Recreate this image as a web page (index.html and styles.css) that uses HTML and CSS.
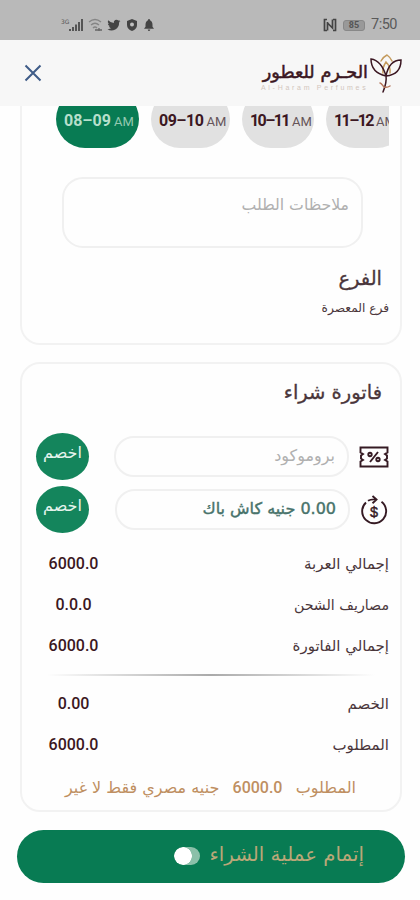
FILE: index.html
```html
<!DOCTYPE html>
<html lang="ar" dir="rtl">

<head>
    <meta charset="utf-8">
    <meta name="viewport" content="width=device-width, initial-scale=1.0">
    <title>الحرم للعطور</title>
    <link rel="stylesheet" href="styles.css">
</head>

<body>
    <div class="status" dir="ltr">
        <div class="status-icons">
            <span class="net">3G</span>
            <svg width="15" height="14" viewBox="0 0 15 14" fill="#555">
                <path d="M0 11h2v2H0zM3 9h2v4H3zM6 6.500h2V13H6zM9 4h2v9H9zM12 1h2v12h-2z" />
            </svg>
            <svg class="wifi" width="15" height="14" viewBox="0 0 15 14" fill="none" stroke="#858585" stroke-width="1.300">
                <path d="M1 4q6-5 12 0M3 7q4-3.500 8 0M5 10q2-2 4 0" />
                <path d="M7 12h7M11 10v3" stroke="#666" />
            </svg>
            <svg width="14" height="14" viewBox="0 0 24 24" fill="#444">
                <path d="M23 5c-.8.400-1.700.600-2.600.800 1-.600 1.600-1.500 2-2.500-.9.500-1.900.900-2.900 1.100A4.600 4.600 0 0 0 11.700 8.600 13 13 0 0 1 2.300 3.800 4.600 4.600 0 0 0 3.700 10c-.8 0-1.500-.2-2.100-.6 0 2.200 1.600 4.100 3.700 4.600-.7.200-1.400.200-2.100.1.600 1.800 2.300 3.100 4.300 3.200A9.300 9.300 0 0 1 .7 19.200 13 13 0 0 0 20.700 7.600C21.600 6.900 22.400 6 23 5z" />
            </svg>
            <svg width="12" height="14" viewBox="0 0 12 14">
                <path d="M6 1l5 2v4q0 4-5 6-5-2-5-6V3z" fill="#444" />
                <circle cx="6" cy="6.500" r="2" fill="#c0c0c0" />
            </svg>
            <svg width="12" height="14" viewBox="0 0 12 14" fill="#444">
                <path d="M6 1q1 0 1 1.200 2.500 1 2.500 4.500v2l1.500 2H1l1.500-2v-2q0-3.500 2.500-4.500Q5 1 6 1zM4.700 11.500h2.600q-.3 1.500-1.300 1.500t-1.300-1.500z" />
            </svg>
        </div>
        <div class="status-right">
            <svg width="14" height="14" viewBox="0 0 14 14" fill="none" stroke="#444" stroke-width="1.700">
                <path d="M4 1.500H1.500v11H4M10 12.500h2.500v-11H10M4.500 4v8.500M4.500 5l5 5V1.500" />
            </svg>
            <span class="battery">85</span>
            <span class="time">7:50</span>
        </div>
    </div>

    <header>
        <div class="brand">
            <svg width="32" height="41" viewBox="0 0 32 41" fill="none" stroke="#3b1722" stroke-width="1.500" stroke-linecap="round">
                <path d="M11 8q2-4 6-6 3 2 5 6M13 20q-1-5 3-11 5 5 4 11" stroke="#c49a5c" />
                <path d="M16 23C7 21 1 16 1 6c7 1 12 7 15 17zM16 23C18 13 23 7 31 7c0 9-5 15-15 16zM16 23q1 6-3 16" />
                <path d="M14 34q-3-4-4-4M14 34q3 1 6-1" stroke="#b5755a" />
            </svg>
            <div class="brand-text">
                <strong>الحـرم للعطور</strong>
                <span dir="ltr">Al-Haram Perfumes</span>
            </div>
        </div>
        <button class="close" aria-label="إغلاق">
            <svg width="18" height="18" viewBox="0 0 18 18" fill="none" stroke="#3f5c88" stroke-width="2">
                <path d="M1.500 1.500l15 15M16.500 1.500l-15 15" />
            </svg>
        </button>
    </header>

    <main>
        <section class="card delivery">
            <div class="slots" dir="ltr">
                <div class="slot valgt"><b>08–09</b> AM</div>
                <div class="slot s2"><b>09–10</b> AM</div>
                <div class="slot s3"><b>10–11</b> AM</div>
                <div class="slot s4"><b>11–12</b> AM</div>
            </div>
            <div class="notes"><span>ملاحظات الطلب</span></div>
            <h2>الفرع</h2>
            <p class="branch">فرع المعصرة</p>
        </section>

        <section class="card invoice">
            <h2>فاتورة شراء</h2>
            <div class="discount">
                <svg class="ticket" width="30" height="22" viewBox="0 0 30 22" fill="none" stroke="#351a23" stroke-width="1.900">
                    <path d="M1.500 1.500h27v5l-2.500 1.500 2 1.500v3l-2 1.500 2.500 1.500v5h-27v-5L4 14l-2-1.500v-3L4 8 1.500 6.500z" />
                    <path d="M11 16l8-10" />
                    <circle cx="11" cy="8.500" r="1.700" />
                    <circle cx="19" cy="13.500" r="1.700" />
                </svg>
                <div class="field promo"><span>بروموكود</span></div>
                <button class="apply">اخصم</button>
            </div>
            <div class="discount cash">
                <svg width="28" height="30" viewBox="0 0 28 30" fill="none" stroke="#351a23" stroke-width="1.900">
                    <path d="M21.500 6.800A12 12 0 1 1 6 7.500M8 5.800Q11 4 16 4.500M12.500 1l4 3.600-4 3.600" />
                    <text x="14" y="21.500" text-anchor="middle" class="dollar">$</text>
                </svg>
                <div class="field"><span>0.00 جنيه كاش باك</span></div>
                <button class="apply">اخصم</button>
            </div>
            <dl>
                <div><dt>إجمالي العربة</dt><dd>6000.0</dd></div>
                <div><dt class="shipping">مصاريف الشحن</dt><dd>0.0.0</dd></div>
                <div><dt>إجمالي الفاتورة</dt><dd>6000.0</dd></div>
            </dl>
            <hr>
            <dl>
                <div><dt>الخصم</dt><dd>0.00</dd></div>
                <div><dt>المطلوب</dt><dd>6000.0</dd></div>
            </dl>
            <p class="total"><span>المطلوب</span><span>6000.0</span><span>جنيه مصري فقط لا غير</span></p>
        </section>

        <button class="checkout">
            <span>إتمام عملية الشراء</span>
            <i class="dots"></i>
        </button>
    </main>
</body>

</html>
```

FILE: styles.css
```css
* {
    box-sizing: border-box;
}

body {
    margin: 0;
    height: 900px;
    overflow: hidden;
    background: #fefefe;
    color: #4a363b;
    font-family: "DejaVu Sans", sans-serif;
}

h2,
p,
dl,
dd {
    margin: 0;
}

button {
    border: 0;
    padding: 0;
    font-family: inherit;
}

svg {
    display: block;
    flex: none;
}

/* status bar */
.status {
    height: 40px;
    padding: 10px 22px 0 61px;
    display: flex;
    justify-content: space-between;
    align-items: center;
    background: #b9b9b9;
}

.status-icons,
.status-right {
    display: flex;
    align-items: center;
}

.status-icons {
    gap: 5px;
}

.net {
    font-size: 6px;
    width: 8px;
    margin: 0 -5px 7px 0;
    color: #555;
}

.wifi {
    margin: 0 -1px;
}

.status-right {
    margin-right: 1px;
}

.battery {
    width: 22px;
    height: 11px;
    margin: 0 6px;
    border-radius: 3px;
    border: 1px solid #888;
    background: #999;
    color: #555;
    font: bold 9px/9px Roboto, sans-serif;
    text-align: center;
}

.time {
    font: 14.500px/16px Roboto, sans-serif;
    color: #5a5a5a;
    width: 26px;
    letter-spacing: -.5px;
}

/* header */
header {
    height: 66px;
    padding: 0 18px 0 24px;
    display: flex;
    align-items: center;
    justify-content: space-between;
    background: #f7f7f7;
}

.brand {
    display: flex;
    gap: 2px;
}

.brand-text {
    width: 107px;
    padding-top: 7px;
    white-space: nowrap;
}

.brand-text strong {
    display: block;
    font-size: 17.700px;
    line-height: 24px;
    font-weight: normal;
    -webkit-text-stroke: .5px #3b1722;
    color: #3b1722;
}

.brand-text span {
    display: block;
    font: 7px/8px "Liberation Sans", sans-serif;
    letter-spacing: 2.700px;
    color: #d2c6bd;
}

.close {
    width: 18px;
    background: none;
}

/* cards */
main {
    padding: 0 18px 0 20px;
}

.card {
    border: 2px solid #f2f2f2;
    border-radius: 20px;
    background: #fefefe;
}

.delivery {
    height: 239px;
    border-top: 0;
    border-radius: 0 0 20px 20px;
}

.slots {
    display: flex;
    gap: 12px;
    margin: 0 11px 0 34px;
    height: 42px;
    overflow: hidden;
}

.slot {
    flex: none;
    width: 83px;
    height: 58px;
    margin-top: -16px;
    padding: 18px 0 0 8px;
    border-radius: 29px;
    background: #e1e1e1;
    color: #655459;
    font: 13px/26px Roboto, sans-serif;
    white-space: nowrap;
}

.slot b {
    font-size: 16px;
    color: #3b1722;
}

.s2 {
    width: 79px;
}

.s2 b {
    letter-spacing: -.5px;
}

.s3 {
    width: 72px;
}

.s4 {
    width: 80px;
}

.s3 b,
.s4 b {
    letter-spacing: -1.600px;
}

.slot.valgt {
    background: #087b53;
    color: #95c9b1;
}

.slot.valgt b {
    color: #b6dfcb;
}

.notes {
    width: 301px;
    height: 71px;
    margin: 29px 37px 0 0;
    padding: 15px 12px 0 0;
    border: 2px solid #f0f0f0;
    border-radius: 21px;
    font-size: 15.700px;
    line-height: 22px;
    color: #b0b0b0;
}

h2 {
    font-weight: normal;
    font-size: 19.500px;
    line-height: 32px;
    padding-right: 18px;
    -webkit-text-stroke: .3px;
}

.delivery h2 {
    margin-top: 15px;
}

.branch {
    font-size: 12.200px;
    line-height: 18px;
    padding-right: 11px;
    margin-top: 4px;
}

.invoice {
    height: 450px;
    margin-top: 17px;
}

.invoice h2 {
    padding-top: 13px;
}

.discount {
    display: flex;
    align-items: center;
    height: 53px;
    padding: 0 12px 0 14px;
}

.invoice h2 + .discount {
    margin-top: 21px;
}

.ticket {
    margin-right: -1px;
}

.dollar {
    font: 14.500px "Liberation Sans", sans-serif;
    direction: ltr;
    fill: #351a23;
    stroke-width: .4px;
}

.field {
    width: 235px;
    height: 41px;
    margin-right: 10px;
    padding-right: 12px;
    border: 2px solid #f0f0f0;
    border-radius: 20px;
    font-size: 16px;
    line-height: 35px;
    color: #48736b;
    -webkit-text-stroke: .4px;
    white-space: nowrap;
}

.promo {
    color: #b0b0b0;
    -webkit-text-stroke: 0;
}

.apply {
    width: 53px;
    height: 47px;
    margin-right: auto;
    padding-bottom: 8px;
    border-radius: 50%;
    background: #14855c;
    color: #e5f4ed;
    font-size: 16px;
}

dl > div {
    display: flex;
    justify-content: space-between;
    align-items: center;
    height: 41px;
    padding: 0 11px 0 21px;
}

.cash + dl {
    margin-top: 7px;
}

dt {
    font-size: 15px;
    line-height: 20px;
}

.shipping {
    font-size: 14.200px;
}

dd {
    width: 61px;
    text-align: center;
    font: 500 16px/20px Roboto, sans-serif;
    color: #3b1722;
}

hr {
    height: 2px;
    margin: 8px 25px 7px;
    border: 0;
    background: linear-gradient(to right, #fefefe, #aaa 50%, #fefefe);
}

.total {
    display: flex;
    justify-content: space-between;
    padding: 0 44px 0 43px;
    margin-top: 9px;
    font-size: 16px;
    line-height: 28px;
    color: #bf8f61;
    white-space: nowrap;
}

.total span:nth-child(2) {
    font: 500 16px/28px Roboto, sans-serif;
}

.checkout {
    display: flex;
    align-items: center;
    gap: 9px;
    width: 388px;
    height: 53px;
    margin: 18px -3px 0 0;
    padding: 0 41px 4px 0;
    border-radius: 27px;
    background: #087b53;
    color: #baa778;
    font-size: 19.800px;
}

.dots {
    width: 26px;
    height: 18px;
    margin-top: 3px;
    border-radius: 9px;
    background: radial-gradient(circle at 9px 9px, #fff 8.500px, #8bc0a9 9px);
}
```
